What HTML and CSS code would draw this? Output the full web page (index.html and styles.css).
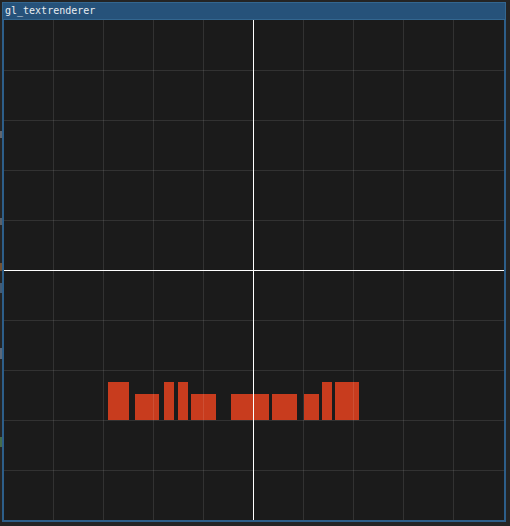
FILE: index.html
```html
<!DOCTYPE html>
<html>
<head>
<meta charset="utf-8">
<link rel="stylesheet" href="styles.css">
</head>
<body>
<div class="behind">
  <span class="frag f1"></span>
  <span class="frag f2"></span>
  <span class="frag f3"></span>
  <span class="frag f4"></span>
  <span class="frag f5"></span>
  <span class="frag f6"></span>
</div>
<div class="window">
  <div class="titlebar">gl_textrenderer</div>
  <div class="plot">
    <svg class="canvas" width="500" height="500" viewBox="0 0 500 500">
      <g fill="#c83c1e">
        <rect x="104" y="362" width="21" height="38"/>
        <rect x="131" y="374" width="24" height="26"/>
        <rect x="160" y="362" width="10" height="38"/>
        <rect x="174" y="362" width="10" height="38"/>
        <rect x="187" y="374" width="25" height="26"/>
        <rect x="227" y="374" width="38" height="26"/>
        <rect x="268" y="374" width="25" height="26"/>
        <rect x="300" y="374" width="15" height="26"/>
        <rect x="318" y="362" width="10" height="38"/>
        <rect x="331" y="362" width="24" height="38"/>
      </g>
      <g stroke="rgba(255,255,255,0.1)" stroke-width="1">
        <line x1="49.5" y1="0" x2="49.5" y2="500"/>
        <line x1="99.5" y1="0" x2="99.5" y2="500"/>
        <line x1="149.5" y1="0" x2="149.5" y2="500"/>
        <line x1="199.5" y1="0" x2="199.5" y2="500"/>
        <line x1="299.5" y1="0" x2="299.5" y2="500"/>
        <line x1="349.5" y1="0" x2="349.5" y2="500"/>
        <line x1="399.5" y1="0" x2="399.5" y2="500"/>
        <line x1="449.5" y1="0" x2="449.5" y2="500"/>
        <line x1="0" y1="50.5" x2="500" y2="50.5"/>
        <line x1="0" y1="100.5" x2="500" y2="100.5"/>
        <line x1="0" y1="150.5" x2="500" y2="150.5"/>
        <line x1="0" y1="200.5" x2="500" y2="200.5"/>
        <line x1="0" y1="300.5" x2="500" y2="300.5"/>
        <line x1="0" y1="350.5" x2="500" y2="350.5"/>
        <line x1="0" y1="400.5" x2="500" y2="400.5"/>
        <line x1="0" y1="450.5" x2="500" y2="450.5"/>
      </g>
      <g stroke="#ffffff" stroke-width="1">
        <line x1="249.5" y1="0" x2="249.5" y2="500"/>
        <line x1="0" y1="250.5" x2="500" y2="250.5"/>
      </g>
    </svg>
  </div>
</div>
</body>
</html>
```
FILE: styles.css
```css
html, body {
  margin: 0;
  padding: 0;
  background: #242424;
  width: 510px;
  height: 526px;
  overflow: hidden;
}
body {
  position: relative;
}
.behind {
  position: absolute;
  left: 0;
  top: 0;
  width: 2px;
  height: 526px;
}
.frag {
  position: absolute;
  left: 0;
  width: 2px;
  opacity: 0.6;
}
.f1 { top: 131px; height: 7px; background: #8a93a0; }
.f2 { top: 218px; height: 7px; background: #7e8896; }
.f3 { top: 263px; height: 8px; background: #a8703a; }
.f4 { top: 283px; height: 10px; background: #5a80a8; }
.f5 { top: 348px; height: 11px; background: #8098b4; }
.f6 { top: 437px; height: 10px; background: #5e9a64; }
.window {
  margin: 2px 0 0 2px;
  width: 500px;
  border: 2px solid #2d5e89;
  border-top: 0;
  background: #1b1b1b;
}
.titlebar {
  height: 18px;
  margin: 0 -2px;
  box-sizing: border-box;
  background: #26527a;
  border: 1px solid #33668f;
  color: #e8ecf0;
  font-family: "DejaVu Sans Mono", monospace;
  font-size: 10px;
  line-height: 16px;
  padding-left: 2px;
}
.plot {
  width: 500px;
  height: 500px;
}
.canvas {
  display: block;
}
```
